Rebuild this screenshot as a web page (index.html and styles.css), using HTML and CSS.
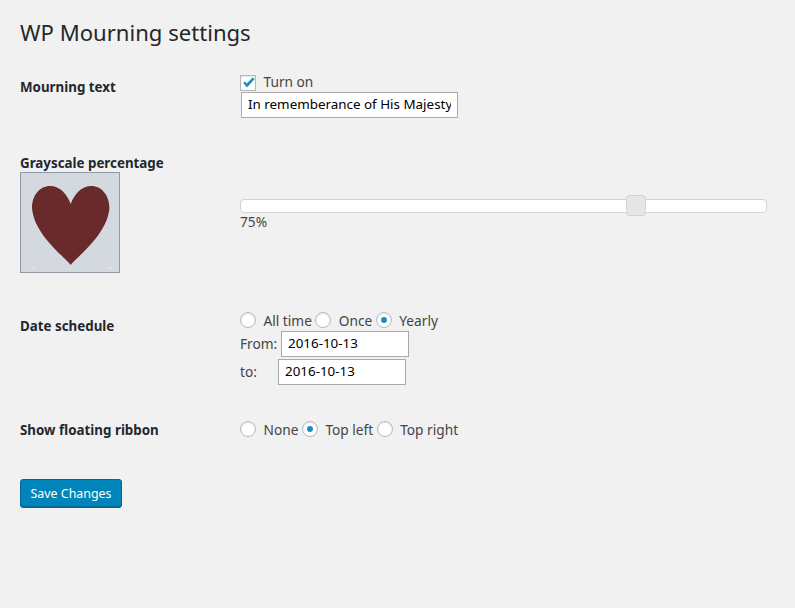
FILE: index.html
```
<!DOCTYPE html>
<html lang="en">
<head>
<meta charset="utf-8">
<title>WP Mourning settings</title>
<link rel="stylesheet" href="styles.css">
</head>
<body>
<main class="wrap">
  <h1 class="title">WP Mourning settings</h1>
  <form class="form">
    <section class="row row-text">
      <h2 class="label">Mourning text</h2>
      <div class="field">
        <label class="opt"><span class="box"><svg class="tick" viewBox="0 0 16 16" width="16" height="16"><path d="M3.2 8 L4.8 6.4 L6.8 8.600 L12.600 2.400 L14.600 4 L7 12.600 Z" fill="#1e8cbe"/></svg></span><span class="check-text">Turn on</span></label>
        <input class="input input-text" type="text" value="In rememberance of His Majesty">
      </div>
    </section>
    <section class="row row-gray">
      <div class="gray-left">
        <h2 class="label">Grayscale percentage</h2>
        <div class="preview">
          <svg viewBox="0 0 98 99" width="98" height="99"><path d="M49.700 31 C46 21 39 13 29 13 C19 13 11 22 11 35 C13 62 44 84 49.700 92 C55.400 84 86.400 62 88.400 35 C88.400 22 80.400 13 70.400 13 C60.400 13 53.400 21 49.700 31 Z" fill="#682a2a"/><path d="M11 95 h4 M49 95 h4 M86 95 h5" stroke="#e4e7ec" stroke-width="1"/></svg>
        </div>
      </div>
      <div class="slider-box">
        <div class="slider"><span class="handle"></span></div>
        <div class="pct">75%</div>
      </div>
    </section>
    <section class="row row-date">
      <h2 class="label">Date schedule</h2>
      <div class="field">
        <div class="radios">
          <label class="opt"><span class="radio"></span><span class="radio-text">All time</span></label>
          <label class="opt"><span class="radio"></span><span class="radio-text">Once</span></label>
          <label class="opt"><span class="radio on"></span><span class="radio-text">Yearly</span></label>
        </div>
        <div class="date-line date-from"><span class="from-label">From:</span><input class="input input-date" type="text" value="2016-10-13"></div>
        <div class="date-line date-to"><span class="to-label">to:</span><input class="input input-date" type="text" value="2016-10-13"></div>
      </div>
    </section>
    <section class="row row-ribbon">
      <h2 class="label">Show floating ribbon</h2>
      <div class="radios">
        <label class="opt"><span class="radio"></span><span class="radio-text">None</span></label>
        <label class="opt"><span class="radio on"></span><span class="radio-text">Top left</span></label>
        <label class="opt"><span class="radio"></span><span class="radio-text">Top right</span></label>
      </div>
    </section>
    <button class="save" type="button">Save Changes</button>
  </form>
</main>
</body>
</html>
```

FILE: styles.css
```
html, body { margin: 0; padding: 0; }
body {
  background: #f1f1f1;
  color: #444;
  font-family: "Noto Sans", "Open Sans", sans-serif;
  font-size: 13.7px;
  height: 608px;
  overflow: hidden;
}
.wrap { padding: 17px 28px 0 20px; }
.title {
  margin: 0;
  font-size: 22.1px;
  font-weight: 400;
  line-height: 30px;
  color: #23282d;
}
.form { display: flex; flex-direction: column; }
.row { display: grid; grid-template-columns: 220px 1fr; }
.row-text { margin-top: 28px; height: 79px; }
.row-gray { height: 129px; }
.row-date { margin-top: 29px; height: 91px; }
.row-ribbon { margin-top: 18px; height: 58px; }
.label {
  margin: 0;
  font-size: 13.35px;
  font-weight: 700;
  line-height: 18px;
  color: #23282d;
}
.row-text .label { padding-top: 3px; }
.row-date .label { padding-top: 5px; }
.field { display: flex; flex-direction: column; align-items: flex-start; }
.opt { display: inline-flex; align-items: center; line-height: 16px; height: 16px; }
.check-text { padding-bottom: 2px; }
.radio-text { padding-top: 2px; }
.box, .radio {
  box-sizing: border-box;
  width: 16px;
  height: 16px;
  border: 1px solid #b4b9be;
  background: #fff;
  box-shadow: inset 0 1px 2px rgba(0,0,0,.1);
  margin-right: 7.5px;
  flex: none;
}
.box { display: block; }
.tick { display: block; margin: -1px; }
.radio { border-radius: 50%; display: flex; align-items: center; justify-content: center; }
.radio.on::before {
  content: "";
  width: 6px;
  height: 6px;
  border-radius: 50%;
  background: #1e8cbe;
}
.radios { display: flex; height: 16px; }
.radios .opt { margin-right: 3.5px; }
.input {
  box-sizing: border-box;
  height: 26px;
  border: 1px solid #a9a9a9;
  background: #fff;
  color: #000;
  font: 13.4px/20px "Noto Sans", "Open Sans", sans-serif;
  padding: 0 6px 2px;
  margin: 0;
  border-radius: 0;
}
.input-text { width: 217px; margin: 1px 0 0 1px; }
.input-date { width: 128px; }
.date-line { display: flex; align-items: center; height: 26px; }
.date-from { margin-top: 3px; }
.from-label { width: 41px; padding-bottom: 2px; }
.date-to { margin-top: 2px; }
.to-label { width: 38px; padding-bottom: 2px; }
.gray-left { display: flex; flex-direction: column; }
.preview {
  width: 100px;
  height: 101px;
  box-sizing: border-box;
  border: 1px solid #8f98a3;
  background: #d4d9e0;
}
.preview svg { display: block; }
.slider-box { padding-top: 45px; }
.slider {
  position: relative;
  box-sizing: border-box;
  height: 14px;
  width: 527px;
  background: #fff;
  border: 1px solid #d3d3d3;
  border-radius: 4px;
}
.handle {
  position: absolute;
  left: 385px;
  top: -5px;
  width: 20px;
  height: 21px;
  box-sizing: border-box;
  background: #e6e6e6;
  border: 1px solid #d3d3d3;
  border-radius: 4px;
}
.pct { line-height: 18px; }
.save {
  box-sizing: border-box;
  align-self: flex-start;
  width: 102px;
  height: 29px;
  padding: 0;
  background: #0085ba;
  border: 1px solid #006799;
  border-radius: 3px;
  box-shadow: inset 0 -1px 0 #006799;
  color: #fff;
  font: 12.4px/26px "Noto Sans", "Open Sans", sans-serif;
}
```
